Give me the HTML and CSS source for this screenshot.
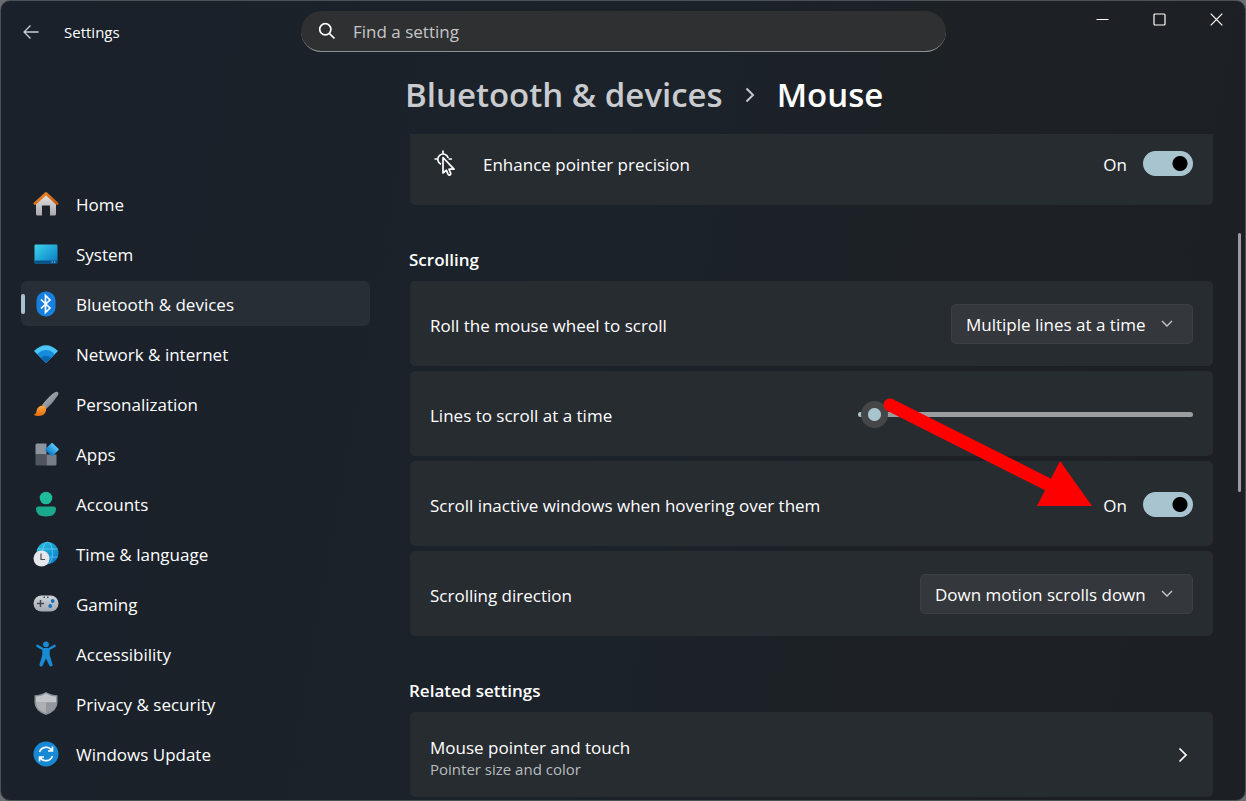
FILE: index.html
```html
<!DOCTYPE html>
<html lang="en">
<head>
<meta charset="utf-8">
<meta name="viewport" content="width=device-width, initial-scale=1">
<title>Settings</title>
<link rel="stylesheet" href="styles.css">
</head>
<body>
<div class="window">
  <header class="titlebar">
    <div class="titlebar-start">
      <button class="back" aria-label="Back"><svg width="16" height="16" viewBox="0 0 16 16" fill="none" stroke="#c9ced3" stroke-width="1.3"><path d="M15.500 8H1M7.500 1.500L1 8l6.500 6.500"/></svg></button>
      <span class="app-name">Settings</span>
    </div>
    <label class="search">
      <svg width="18" height="18" viewBox="0 0 18 18" fill="none" stroke="#fff" stroke-width="1.7"><circle cx="7.300" cy="7.300" r="5.600"/><path d="M11.300 11.300L16.500 16.500"/></svg>
      <input type="text" placeholder="Find a setting" aria-label="Find a setting">
    </label>
    <div class="window-buttons">
      <button aria-label="Minimize"><svg width="13" height="13" viewBox="0 0 13 13" fill="none" stroke="#fff" stroke-width="1.200"><path d="M.5 6.500h12"/></svg></button>
      <button aria-label="Maximize"><svg width="13" height="13" viewBox="0 0 13 13" fill="none" stroke="#fff" stroke-width="1.200"><rect x="1" y="1" width="11" height="11" rx="1"/></svg></button>
      <button aria-label="Close"><svg width="13" height="13" viewBox="0 0 13 13" fill="none" stroke="#fff" stroke-width="1.200"><path d="M.7.7l11.600 11.600M12.300.7L.7 12.300"/></svg></button>
    </div>
  </header>

  <div class="body">
    <nav class="sidebar">
      <a class="nav-item" href="#home">
        <svg class="nav-icon" viewBox="0 0 26 26"><defs><linearGradient id="house" x2="0" y2="1"><stop stop-color="#e6e3e3"/><stop offset="1" stop-color="#a9a9ad"/></linearGradient><linearGradient id="roof" x2="1" y2="1"><stop stop-color="#f08a2c"/><stop offset="1" stop-color="#bf5c10"/></linearGradient></defs><path d="M13 3L3 12v11q0 1.500 1.500 1.500H9V14.500h8v10h4.500q1.500 0 1.500-1.500V12z" fill="url(#house)"/><path d="M2 12.500L13 2.500l11 10" fill="none" stroke="url(#roof)" stroke-width="3" stroke-linecap="round" stroke-linejoin="round"/></svg>
        <span>Home</span></a>
      <a class="nav-item" href="#system">
        <svg class="nav-icon" viewBox="0 0 26 26"><defs><linearGradient id="screen" x2="1" y2="1"><stop stop-color="#3bd5ec"/><stop offset="1" stop-color="#0878c2"/></linearGradient></defs><rect x="1.500" y="3.500" width="23" height="19" rx="1.200" fill="url(#screen)"/><path d="M1.500 19.500h23v2q0 1-1 1h-21q-1 0-1-1z" fill="#08528a"/><path d="M18.500 20.500h1.300v1h-1.300zM21 20.500h1.300v1H21z" fill="#9fdcf5"/></svg>
        <span>System</span></a>
      <a class="nav-item active" href="#bluetooth" aria-current="page">
        <svg class="nav-icon" viewBox="0 0 26 26"><rect x="3.500" y=".5" width="19" height="25" rx="9" fill="#1580df"/><path d="M8 8.500l9 8.500-4.500 4.500v-17l4.500 4.500-9 8.500" fill="none" stroke="#fff" stroke-width="1.700"/></svg>
        <span>Bluetooth &amp; devices</span></a>
      <a class="nav-item" href="#network">
        <svg class="nav-icon" viewBox="0 0 26 26"><path d="M1 10Q13-1.500 25 10L14 21q-1 1-2 0z" fill="#49c6f7"/><path d="M4.300 13.200Q13 5 21.700 13.200L14 21q-1 1-2 0z" fill="#168bdc"/><path d="M8 16.800Q13 12.500 18 16.800L14 21q-1 1-2 0z" fill="#0867b2"/></svg>
        <span>Network &amp; internet</span></a>
      <a class="nav-item" href="#personalization">
        <svg class="nav-icon" viewBox="0 0 26 26"><defs><linearGradient id="handle" x2="1" y2="1"><stop stop-color="#bdc2c6"/><stop offset="1" stop-color="#686f77"/></linearGradient><linearGradient id="brush" x2="0" y2="1"><stop stop-color="#ffaa46"/><stop offset="1" stop-color="#e66a0a"/></linearGradient></defs><path d="M9 14Q17 4 22 1.200q2-1 3.200.3.800 1.200-.4 3Q20 12 13 18z" fill="url(#handle)"/><path d="M9.500 14.500q4 .5 3.500 5-1 5-7 5.500-3.500.2-5.500-1.500 2.800-.3 3-3.500.8-5 6-5.500z" fill="url(#brush)"/></svg>
        <span>Personalization</span></a>
      <a class="nav-item" href="#apps">
        <svg class="nav-icon" viewBox="0 0 26 26"><defs><linearGradient id="tile" x2="0" y2="1"><stop stop-color="#5cc8fa"/><stop offset="1" stop-color="#087acb"/></linearGradient></defs><path d="M4 2.500h9.500v11H2.500V4q0-1.500 1.500-1.500z" fill="#8d949d"/><path d="M2.500 13.500h11v11H4q-1.500 0-1.500-1.500z" fill="#51565e"/><path d="M13.500 13.500h10V23q0 1.500-1.500 1.500h-8.500z" fill="#777e87"/><rect x="14" y="3.500" width="10" height="10" rx="1" fill="url(#tile)" transform="rotate(45 19 8.500)"/></svg>
        <span>Apps</span></a>
      <a class="nav-item" href="#accounts">
        <svg class="nav-icon" viewBox="0 0 26 26" fill="#20bb9b"><circle cx="13" cy="7" r="6.300"/><path d="M5.500 15.500h15q2.500 0 2.500 2.500 0 7.500-10 7.500T3 18q0-2.500 2.500-2.500z" fill="#1ba98d"/></svg>
        <span>Accounts</span></a>
      <a class="nav-item" href="#time">
        <svg class="nav-icon" viewBox="0 0 26 26" fill="none"><defs><linearGradient id="globe" x2="1" y2="1"><stop stop-color="#2ac3dd"/><stop offset="1" stop-color="#0a76cd"/></linearGradient></defs><circle cx="14.500" cy="12" r="11" fill="url(#globe)"/><g stroke="#7edbf1" stroke-width=".6"><ellipse cx="14.500" cy="12" rx="5" ry="11"/><path d="M4.500 8h20M4.500 16h20"/></g><circle cx="8.500" cy="17.500" r="8" fill="#e5e7eb"/><path d="M8 12.500v6h4" stroke="#484e57" stroke-width="1.200"/></svg>
        <span>Time &amp; language</span></a>
      <a class="nav-item" href="#gaming">
        <svg class="nav-icon" viewBox="0 0 26 26"><defs><linearGradient id="pad" x2="0" y2="1"><stop stop-color="#d0d4da"/><stop offset="1" stop-color="#a2a8b2"/></linearGradient></defs><rect x=".5" y="4.500" width="25" height="16" rx="8" fill="url(#pad)"/><path d="M7.500 9v7M4 12.500h7" stroke="#424751" stroke-width="1.500"/><path d="M10.500 5.500h1.500v1.500h-1.500zM14 5.500h1.500v1.500H14z" fill="#424751"/><circle cx="19.700" cy="10" r="1.900" fill="#1471bd"/><circle cx="17.200" cy="15" r="1.900" fill="#1471bd"/></svg>
        <span>Gaming</span></a>
      <a class="nav-item" href="#accessibility">
        <svg class="nav-icon" viewBox="0 0 26 26" fill="#198bd5"><circle cx="13" cy="3.300" r="2.900"/><path d="M4.500 3.500q-1.500 0-1.300 1.500.2.800 1 1.200L9.300 9v5L6.500 23.500q-.3 1.500 1 2 1.500.4 2.200-1L13 17.500l3.300 7q.7 1.400 2.200 1 1.300-.5 1-2L16.700 14V9l5.100-2.800q.8-.4 1-1.200.2-1.500-1.300-1.500L15.500 7h-5z"/></svg>
        <span>Accessibility</span></a>
      <a class="nav-item" href="#privacy">
        <svg class="nav-icon" viewBox="0 0 26 26"><path d="M13 1q4.500 3 11.500 3.300V11.500q0 8.500-11.500 12.500Q1.500 20 1.500 11.500V4.300Q8.500 4 13 1z" fill="#8d9298"/><path d="M13 2.500q4 2.700 10 3v6H3v-6q6-.3 10-3z" fill="#c1c4c8"/><path d="M3 11.500h10v11Q3 18.500 3 11.500z" fill="#adb1b6"/><path d="M13 11.500h10q0 7-10 11z" fill="#92979d"/></svg>
        <span>Privacy &amp; security</span></a>
      <a class="nav-item" href="#update">
        <svg class="nav-icon" viewBox="0 0 26 26" fill="none" stroke="#fff" stroke-width="1.600"><circle cx="13" cy="13" r="12.500" fill="#1788d4" stroke="none"/><path d="M6.500 11a7 7 0 0 1 12.500-1.500M19.500 5.500v4.500H15M19.500 15A7 7 0 0 1 7 16.500M6.500 20.500V16H11"/></svg>
        <span>Windows Update</span></a>
    </nav>

    <main class="content">
      <h1 class="breadcrumb">
        <a href="#bluetooth">Bluetooth &amp; devices</a>
        <svg width="10" height="16" viewBox="0 0 10 16" fill="none" stroke="#c5c8cc" stroke-width="2"><path d="M1.500 1.500L8 8l-6.500 6.500"/></svg>
        <span>Mouse</span>
      </h1>

      <section class="card card-cut">
        <svg class="card-icon" width="22" height="26" viewBox="0 0 22 26" fill="none" stroke="#fff" stroke-width="1.700"><path d="M9 .5v4M.5 9H4.500M14.500 9H18M7 14.200A5.300 5.300 0 1 1 14.200 8"/><path d="M9 7.500V23l3.300-2.800 1.700 4q.7 1.300 1.900.8 1.200-.6.700-1.900L15 19.200h5z" stroke-linejoin="round"/></svg>
        <label class="card-label" for="precision">Enhance pointer precision</label>
        <span class="state">On</span>
        <input class="switch" type="checkbox" id="precision" checked>
      </section>

      <h2>Scrolling</h2>
      <section class="group">
        <div class="card">
          <label class="card-label" for="wheel">Roll the mouse wheel to scroll</label>
          <span class="dropdown"><select id="wheel"><option>Multiple lines at a time</option></select><svg width="12" height="8" viewBox="0 0 12 8" fill="none" stroke="#c4c6ca" stroke-width="1.400"><path d="M1 1l5 5 5-5"/></svg></span>
        </div>
        <div class="card">
          <label class="card-label" for="lines">Lines to scroll at a time</label>
          <input class="slider" type="range" id="lines" min="0" max="100" value="1">
        </div>
        <div class="card">
          <label class="card-label" for="inactive">Scroll inactive windows when hovering over them</label>
          <span class="state">On</span>
          <input class="switch" type="checkbox" id="inactive" checked>
          <svg class="pointer" width="212" height="112" viewBox="0 0 212 112" aria-hidden="true"><path d="M9 10L170 91" stroke="#f00" stroke-width="13" stroke-linecap="round"/><path d="M179 66L211 111H156z" fill="#f00"/></svg>
        </div>
        <div class="card">
          <label class="card-label" for="direction">Scrolling direction</label>
          <span class="dropdown"><select id="direction"><option>Down motion scrolls down</option></select><svg width="12" height="8" viewBox="0 0 12 8" fill="none" stroke="#c4c6ca" stroke-width="1.400"><path d="M1 1l5 5 5-5"/></svg></span>
        </div>
      </section>

      <h2>Related settings</h2>
      <a class="card" href="#pointer">
        <span class="card-label">Mouse pointer and touch<small>Pointer size and color</small></span>
        <svg class="chevron" width="10" height="16" viewBox="0 0 10 16" fill="none" stroke="#fff" stroke-width="1.700"><path d="M1.500 1.500L8 8l-6.500 6.500"/></svg>
      </a>
    </main>
  </div>
  <div class="scrollbar"></div>
</div>
</body>
</html>
```
FILE: styles.css
```css
* { box-sizing: border-box; }

body {
  margin: 0;
  background: #6b6f73;
  color: #fff;
  font: 17px/24px "Open Sans", "Noto Sans", sans-serif;
}

a { color: inherit; text-decoration: none; }
button { border: 0; padding: 0; background: none; }
svg { display: block; flex: none; }

.window {
  position: relative;
  display: flex;
  flex-direction: column;
  height: 100vh;
  overflow: hidden;
  border: 1px solid #4c5157;
  border-radius: 10px;
  background: linear-gradient(100deg, #1a212a 0%, #1b222a 45%, #1d2125 75%, #1c2025 100%);
}

.titlebar {
  display: grid;
  grid-template-columns: 300px minmax(0, 645px) 1fr;
  align-items: start;
  padding-top: 10px;
}

.titlebar-start {
  display: flex;
  align-items: center;
  gap: 25px;
  height: 41px;
  padding-left: 22px;
}

.app-name { font-size: 15px; }

.search {
  display: flex;
  align-items: center;
  gap: 15px;
  height: 41px;
  padding-left: 17px;
  border-bottom: 1px solid #8f9294;
  border-radius: 21px;
  background: #2e3031;
}

.search input {
  flex: 1;
  min-width: 0;
  border: 0;
  outline: 0;
  padding: 2px 0 0 2px;
  background: none;
  color: #fff;
  font: inherit;
}

.search input::placeholder { color: #c6c7c9; opacity: 1; }

.window-buttons {
  display: flex;
  justify-content: flex-end;
}

.window-buttons button {
  display: grid;
  place-items: center;
  width: 57px;
  height: 17px;
}

.body {
  display: grid;
  grid-template-columns: 369px minmax(0, 1fr);
  gap: 40px;
  padding: 21px 32px 0 0;
}

.sidebar {
  display: flex;
  flex-direction: column;
  gap: 5px;
  padding: 108px 0 0 20px;
}

.nav-item {
  position: relative;
  display: flex;
  align-items: center;
  gap: 17px;
  height: 45px;
  padding-left: 12px;
  border-radius: 6px;
}

.nav-icon { width: 26px; height: 26px; }
.nav-item span { padding-top: 2px; }
.nav-item.active { background: #272e36; }

.nav-item.active::before {
  content: "";
  position: absolute;
  left: 0;
  top: 13px;
  width: 4px;
  height: 20px;
  border-radius: 2px;
  background: #a8c3cf;
}

.breadcrumb {
  display: flex;
  align-items: center;
  gap: 22px;
  height: 44px;
  margin: 0 0 17px -5px;
  font-size: 33px;
  font-weight: 600;
}

.breadcrumb a { color: #c9cbce; }

h2 {
  margin: 0 0 0 -1px;
  height: 76px;
  padding-top: 43px;
  font-size: 17px;
  font-weight: 600;
}

.group { display: grid; gap: 5px; }

.card {
  position: relative;
  display: flex;
  align-items: center;
  min-height: 85px;
  padding: 1px 20px 0;
  border-radius: 5px;
  background: #272c31;
}

.card-cut {
  min-height: 71px;
  padding-bottom: 14px;
  border-radius: 0 0 5px 5px;
}

.card-icon { margin: 0 27px 0 4px; }
.card-label { flex: 1; padding-top: 3px; }
.card-label small { display: block; color: #b9bcbf; font-size: 15px; line-height: 18px; }
.state { padding-top: 3px; margin-right: 16px; }

.switch {
  appearance: none;
  width: 50px;
  height: 25px;
  margin: 0;
  border-radius: 13px;
  background: radial-gradient(circle at 37px 50%, #000 7px, #a8c4cf 8px);
}

.dropdown { position: relative; }

.dropdown select {
  appearance: none;
  display: block;
  height: 40px;
  padding: 2px 46px 0 14px;
  border: 1px solid #3c4045;
  border-radius: 5px;
  background: #34373c;
  color: #fff;
  font: inherit;
}

.dropdown svg {
  position: absolute;
  right: 20px;
  top: 16px;
  pointer-events: none;
}

.slider {
  appearance: none;
  width: 335px;
  height: 27px;
  margin: 0;
  background: none;
}

.slider::-webkit-slider-runnable-track {
  height: 5px;
  border-radius: 3px;
  background: linear-gradient(90deg, #a8c4cf 10px, #9b9ea1 10px);
}

.slider::-webkit-slider-thumb {
  appearance: none;
  width: 27px;
  height: 27px;
  margin-top: -11px;
  border-radius: 50%;
  background: radial-gradient(circle, #a8c4cf 6px, #454647 7px);
}

.pointer {
  position: absolute;
  right: 120px;
  top: -66px;
  pointer-events: none;
}

.chevron { margin-right: 5px; }

.scrollbar {
  position: absolute;
  right: 4px;
  top: 232px;
  width: 3px;
  height: 259px;
  border-radius: 2px;
  background: #999c9f;
}
```
